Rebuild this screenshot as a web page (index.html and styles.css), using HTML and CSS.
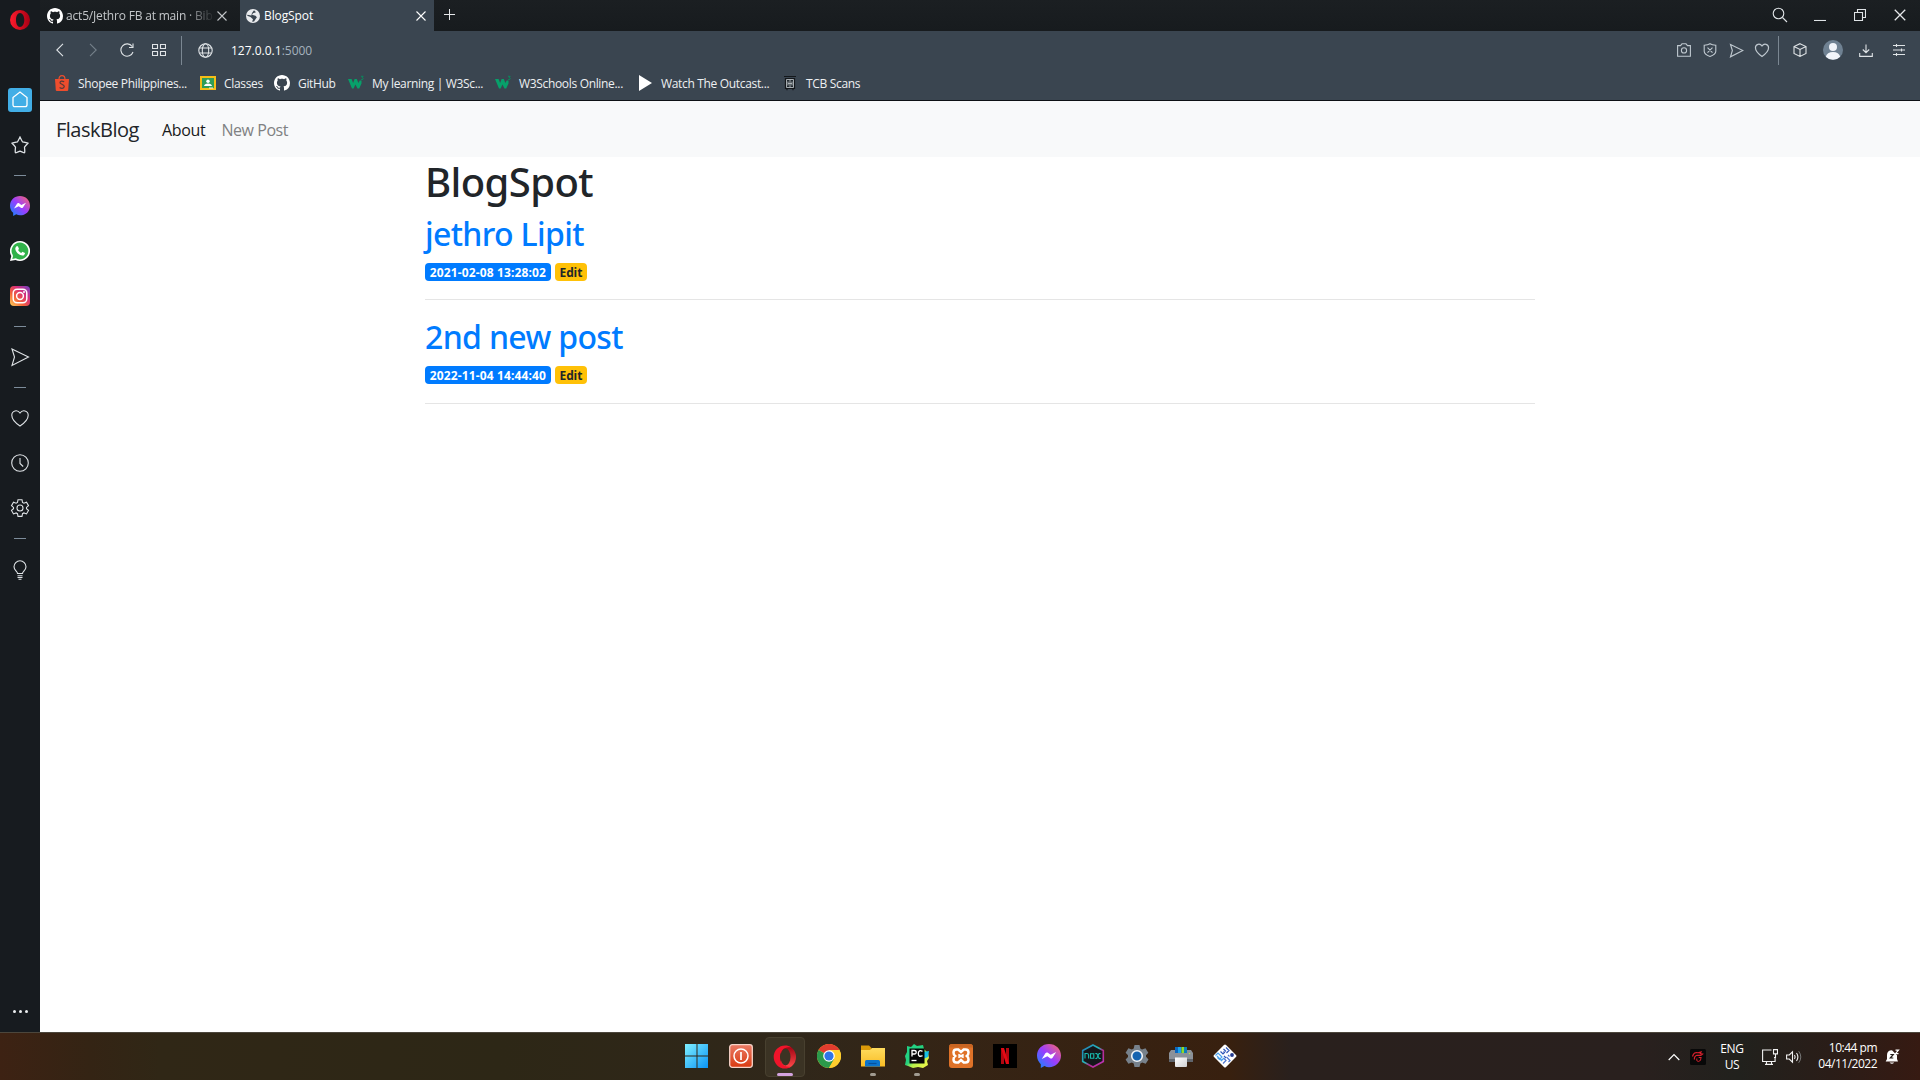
FILE: index.html
```html
<!DOCTYPE html>
<html lang="en">
<head>
<meta charset="utf-8">
<title>BlogSpot</title>
<link rel="stylesheet" href="styles.css">
</head>
<body>
<svg class="defs" width="0" height="0" aria-hidden="true">
  <defs>
    <linearGradient id="msg" x1="0" y1="1" x2="1" y2="0"><stop offset="0" stop-color="#0a8cff"/><stop offset=".5" stop-color="#9a3dff"/><stop offset="1" stop-color="#ff6b64"/></linearGradient>
    <linearGradient id="opera" x1="0" x2="1"><stop offset="0" stop-color="#ff1b2d"/><stop offset="1" stop-color="#a70014"/></linearGradient>
    <linearGradient id="operaIn" x1="0" y1="0" x2="0" y2="1"><stop offset="0" stop-color="#9c0010"/><stop offset="1" stop-color="#ff4b4b"/></linearGradient>
    <linearGradient id="insta" x1="0" y1="1" x2="1" y2="0"><stop offset="0" stop-color="#ffd35a"/><stop offset=".35" stop-color="#f4623a"/><stop offset=".65" stop-color="#d62e7c"/><stop offset="1" stop-color="#6a45c8"/></linearGradient>
    <linearGradient id="win" x1="0" y1="0" x2="1" y2="1"><stop offset="0" stop-color="#7ff0ff"/><stop offset="1" stop-color="#0a93f5"/></linearGradient>
    <linearGradient id="power" x1="0" y1="0" x2="0" y2="1"><stop offset="0" stop-color="#ea7b66"/><stop offset="1" stop-color="#d93a10"/></linearGradient>
    <linearGradient id="folder" x1="0" y1="0" x2="0" y2="1"><stop offset="0" stop-color="#ffdc5e"/><stop offset="1" stop-color="#f9bc25"/></linearGradient>
    <linearGradient id="pc" x1="0" y1="0" x2="1" y2="1"><stop offset="0" stop-color="#1fd489"/><stop offset=".45" stop-color="#26d17e"/><stop offset=".6" stop-color="#b8ef4a"/><stop offset="1" stop-color="#fcf84a"/></linearGradient>
    <linearGradient id="nox" x1="0" y1="0" x2="1" y2="1"><stop offset="0" stop-color="#2477b8"/><stop offset=".45" stop-color="#25b8b8"/><stop offset=".6" stop-color="#b02b8c"/><stop offset="1" stop-color="#c137c4"/></linearGradient>
    <linearGradient id="paper" x1="0" y1="0" x2="1" y2="1"><stop offset="0" stop-color="#fff"/><stop offset="1" stop-color="#cfcfd2"/></linearGradient>
    <symbol id="i-close" viewBox="0 0 12 12"><path d="M1.5 1.5l9 9M10.5 1.5l-9 9" fill="none" stroke="currentColor" stroke-width="1.1"/></symbol>
    <symbol id="i-github" viewBox="0 0 16 16"><path fill="#fff" d="M8 0C3.58 0 0 3.58 0 8c0 3.54 2.29 6.53 5.47 7.59.4.07.55-.17.55-.38 0-.19-.01-.82-.01-1.49-2.01.37-2.53-.49-2.69-.94-.09-.23-.48-.94-.82-1.13-.28-.15-.68-.52-.01-.53.63-.01 1.08.58 1.23.82.72 1.21 1.87.87 2.33.66.07-.52.28-.87.51-1.07-1.78-.2-3.64-.89-3.64-3.95 0-.87.31-1.59.82-2.15-.08-.2-.36-1.02.08-2.12 0 0 .67-.21 2.2.82.64-.18 1.32-.27 2-.27s1.36.09 2 .27c1.53-1.04 2.2-.82 2.2-.82.44 1.1.16 1.92.08 2.12.51.56.82 1.27.82 2.15 0 3.07-1.87 3.75-3.65 3.95.29.25.54.73.54 1.48 0 1.07-.01 1.93-.01 2.2 0 .21.15.46.55.38A8.01 8.01 0 0 0 16 8c0-4.42-3.58-8-8-8z"/></symbol>
    <symbol id="i-w3" viewBox="0 0 16 16"><path fill="#07a06a" d="M0 4h3.600l1.500 4L6.600 4h2.200l1.600 4 1.300-2.500h1.800v3L11.200 13.400H9.500L7.400 9.500l-1.800 3.900H4z"/><path d="M13 1.300h2.200L14 2.700c2 0 1.600 2.300-.9 1.900" fill="none" stroke="#07905f" stroke-width=".9"/></symbol>
    <symbol id="i-messenger" viewBox="0 0 24 24"><path fill="url(#msg)" d="M12 0C5.300 0 0 4.900 0 11.600c0 3.500 1.400 6.500 3.800 8.600V24l3.700-2c1.400.8 2.900 1.200 4.500 1.200 6.700 0 12-4.900 12-11.600S18.700 0 12 0z"/><path d="M4.800 14.900l3.600-5.600c.6-.9 1.700-1.100 2.500-.5l2.700 2 5.600-2.800-3.600 5.700c-.6.9-1.700 1.100-2.500.5l-2.700-2z" fill="#fff"/></symbol>
    <symbol id="i-send" viewBox="0 0 20 20"><path d="M2 2l16.500 8L2 18.500 4.500 10z"/></symbol>
    <symbol id="i-heart" viewBox="0 0 20 20"><path d="M10 18C7.500 16.300 1.800 12 1.800 7.200 1.800 2.500 7.500 1.200 10 5c2.500-3.800 8.200-2.500 8.200 2.200C18.200 12 12.500 16.300 10 18z"/></symbol>
  </defs>
</svg>

<div class="desktop">
  <div class="browser">
    <aside class="sidebar">
      <div class="side-logo"><svg width="20" height="20" viewBox="0 0 20 20"><path fill="url(#opera)" fill-rule="evenodd" d="M10 0a10 10 0 1 1 0 20a10 10 0 1 1 0-20zm0 3C7.500 3 6 6.200 6 10s1.500 7 4 7 4.300-3.200 4.300-7S12.500 3 10 3z"/></svg></div>
      <div class="side-cell"><span class="home"><svg class="line" width="16" height="17" viewBox="0 0 16 17"><path d="M1 6.500L8 1l7 5.500v7.200q0 2-2 2H3q-2 0-2-2z" stroke-width="1.300"/></svg></span></div>
      <div class="side-cell"><svg class="line" width="18" height="18" viewBox="0 0 20 20"><path d="M10 1.200Q11.500 4.500 12.700 6.400 15.500 6.900 18.800 8 16.500 10.300 15 12.300 15.300 15 15.300 18q-.3.700-1 .6Q12 17.500 10 16.800 8 17.500 5.700 18.600q-.7.100-1-.6 0-3 .3-5.700Q3.500 10.300 1.200 8q3.300-1.100 6.100-1.600Q8.500 4.500 10 1.200z" stroke-width="1.400"/></svg></div>
      <div class="side-rule"></div>
      <div class="side-cell"><svg width="20" height="20"><use href="#i-messenger"/></svg></div>
      <div class="side-cell"><svg width="20" height="20" viewBox="0 0 20 20"><path fill="#fff" d="M10 0a10 10 0 1 1-4.500 18.900L0 20l1.300-5A10 10 0 0 1 10 0z"/><path fill="#31b24a" d="M10 1.600a8.400 8.400 0 1 1-4.200 15.700L2.300 18.100l.8-3.300A8.400 8.400 0 0 1 10 1.600z"/><path fill="#fff" d="M6.800 5.200l1.100.1 1.100 2.600-.9 1.200c.8 1.500 1.800 2.300 3.200 3l1.100-1.300 2.600 1.300c0 1.700-1.200 2.600-2.700 2.500-3.500-.4-7-3.600-7-7 0-1 .7-2.100 1.500-2.400z"/></svg></div>
      <div class="side-cell"><svg width="20" height="20" viewBox="0 0 20 20"><rect width="20" height="20" rx="4" fill="url(#insta)"/><g fill="none" stroke="#fff" stroke-width="1.500"><rect x="3.200" y="3.200" width="13.600" height="13.600" rx="4"/><circle cx="10" cy="10" r="3.400"/></g><circle cx="14" cy="6" r="1" fill="#fff"/></svg></div>
      <div class="side-rule"></div>
      <div class="side-cell"><svg class="line" width="20" height="20"><use href="#i-send"/></svg></div>
      <div class="side-rule"></div>
      <div class="side-cell"><svg class="line" width="20" height="20"><use href="#i-heart"/></svg></div>
      <div class="side-cell"><svg class="line" width="20" height="20" viewBox="0 0 20 20"><circle cx="10" cy="10" r="8.300"/><path d="M10 5v5.500l3.200 3"/></svg></div>
      <div class="side-cell"><svg class="line" width="20" height="20" viewBox="0 0 20 20"><circle cx="10" cy="10" r="3"/><path d="M8 1.700h4l.5 2.700 1.400.8 2.600-1 2 3.500-2 1.700v1.300l2 1.700-2 3.500-2.600-1-1.400.8-.5 2.700H8l-.5-2.700-1.400-.8-2.600 1-2-3.500 2-1.700V9.400l-2-1.700 2-3.500 2.600 1 1.400-.8z"/></svg></div>
      <div class="side-rule last"></div>
      <div class="side-cell"><svg class="line" width="16" height="20" viewBox="0 0 16 20"><path d="M5.500 13.500c0-2-3.500-3-3.500-6.700a6 6 0 0 1 12 0c0 3.700-3.500 4.700-3.500 6.700zM5.500 15.800h5M5.500 17.500h5M6.500 19.200h3"/></svg></div>
      <div class="side-more"><i></i><i></i><i></i></div>
    </aside>

    <div class="window">
      <header class="tabstrip">
        <div class="tab">
          <svg width="16" height="16"><use href="#i-github"/></svg>
          <span class="tab-title faded">act5/Jethro FB at main · Bib</span>
          <svg width="12" height="12"><use href="#i-close"/></svg>
        </div>
        <div class="tab active">
          <svg width="14" height="14" viewBox="0 0 14 14"><circle cx="7" cy="7" r="7" fill="#e8eaed"/><path d="M8 1.300l2 1.900-3 1-1 1.600 3.500.9 1.400 1.500-1.600 2.300-1.200 2-2 .3.900-2.600L4.500 8 1.200 6.800l.3-1 3.800.8L6 4z" fill="#3a4550"/></svg>
          <span class="tab-title">BlogSpot</span>
          <svg width="12" height="12"><use href="#i-close"/></svg>
        </div>
        <svg class="new-tab" width="12" height="12" viewBox="0 0 12 12"><path d="M5.500 0v11M0 5.500h11" stroke="#e6e8ea"/></svg>
        <div class="win-buttons line">
          <svg width="16" height="16" viewBox="0 0 16 16"><circle cx="6.500" cy="6.500" r="5.300"/><path d="M10.500 10.500l4.500 4.500"/></svg>
          <svg width="12" height="12" viewBox="0 0 12 12"><path d="M0 11.500h12"/></svg>
          <svg width="12" height="12" viewBox="0 0 12 12"><path d="M.5 3.500h8v8h-8zM3.500 3.500v-3h8v8h-3"/></svg>
          <svg width="14" height="14"><use href="#i-close"/></svg>
        </div>
      </header>

      <div class="addressbar">
        <div class="nav-icons line">
          <svg width="10" height="14" viewBox="0 0 10 14"><path d="M8 .8L1.800 7 8 13.200"/></svg>
          <svg class="dim" width="10" height="14" viewBox="0 0 10 14"><path d="M2 .8L8.200 7 2 13.200"/></svg>
          <svg width="14" height="14" viewBox="0 0 14 14"><path d="M12.200 3.500A6.200 6.200 0 1 0 13 9M13 .5v4H9"/></svg>
          <svg width="14" height="12" viewBox="0 0 14 12"><path d="M.5.500h5v4h-5zM8.500.5h5v4h-5zM.5 7.500h5v4h-5zM8.500 7.500h5v4h-5z"/></svg>
          <b class="divider"></b>
          <svg width="15" height="15" viewBox="0 0 15 15"><circle cx="7.500" cy="7.500" r="6.700"/><ellipse cx="7.500" cy="7.500" rx="3.200" ry="6.700"/><path d="M1.500 5h12M1.500 10h12"/></svg>
        </div>
        <div class="url">127.0.0.1<span>:5000</span></div>
        <div class="tool-icons line">
          <svg class="soft" width="14" height="14" viewBox="0 0 14 14"><path d="M.6 2.600h2.900L5 .8h4l1.500 1.800h2.900v10.600H.6z"/><circle cx="7" cy="7.400" r="2.600"/></svg>
          <svg class="soft" width="14" height="14" viewBox="0 0 14 14"><path d="M1.200 2.200Q5 2 7 .7q2 1.300 5.800 1.500v6q0 3.200-5.800 5.200-5.800-2-5.800-5.200zM4.500 4.600l5 5M9.500 4.600l-5 5"/></svg>
          <svg class="soft bold" width="15" height="15"><use href="#i-send"/></svg>
          <svg class="soft bold" width="16" height="16"><use href="#i-heart"/></svg>
          <b class="divider"></b>
          <svg width="14" height="14" viewBox="0 0 14 14"><path d="M7 .7l6 2.800v7L7 13.400l-6-2.900v-7zM1 3.500l6 3 6-3M7 6.500v6.900"/></svg>
          <svg class="avatar" width="20" height="20" viewBox="0 0 20 20"><circle cx="10" cy="10" r="10" fill="#6f8192"/><circle cx="10" cy="7" r="4" fill="#f1f4fa"/><path d="M2.800 16.800Q4 12 10 12t7.200 4.800A10 10 0 0 1 2.800 16.800z" fill="#f1f4fa"/></svg>
          <svg width="14" height="13" viewBox="0 0 14 13"><path d="M7 .5v8M3.800 5.500L7 8.700l3.200-3.200M.7 9v3.400h12.600V9"/></svg>
          <svg width="12" height="12" viewBox="0 0 12 12"><path d="M0 1.500h12M0 6h12M0 10.500h12M3.500 0v3M8.500 4.500v3M3.500 9v3"/></svg>
        </div>
      </div>

      <div class="bookmarks">
        <a><svg width="16" height="16" viewBox="0 0 16 16"><path d="M5 4.500Q5 .7 8 .7t3 3.800" fill="none" stroke="#ee4d2d" stroke-width="1.200"/><path d="M1 4h14l-.8 11.200q-.1.800-1 .8H2.800q-.9 0-1-.8z" fill="#ee4d2d"/><path d="M10.200 6.800Q7 5.200 6 7.300C5.500 9.500 10.500 9 10.300 11.700 9.800 14 7 13.600 5.600 12.600" fill="none" stroke="#573a39" stroke-width="1.200"/></svg>Shopee Philippines...</a>
        <a><svg width="16" height="16" viewBox="0 0 16 16"><path d="M0 1h16v14H0z" fill="#f4bd16"/><path d="M2 3h12v10H2z" fill="#2f9d58"/><circle cx="8" cy="6.300" r="1.700" fill="#fff"/><path d="M4 11q.5-2.500 4-2.500t4 2.500z" fill="#fff"/><path d="M9 12.500h4v1H9z" fill="#eee"/></svg>Classes</a>
        <a><svg width="16" height="16"><use href="#i-github"/></svg>GitHub</a>
        <a><svg width="16" height="16"><use href="#i-w3"/></svg>My learning | W3Sc...</a>
        <a><svg width="16" height="16"><use href="#i-w3"/></svg>W3Schools Online...</a>
        <a><svg width="16" height="16" viewBox="0 0 16 16"><path d="M2 0l13 8-13 8z" fill="#fff"/></svg>Watch The Outcast...</a>
        <a><svg width="16" height="16" viewBox="0 0 16 16"><path d="M2 1.500h12M3.500 3.500h9v10h-9zM5 14v1.300M11 14v1.300" fill="#222a30" stroke="#14181c" stroke-width="1.200"/><path d="M4.500 4.500h7v8h-7zM8 4.500v8M6 6.500v4M10 6.500v4M6 8.500h4" fill="none" stroke="#b4babe" stroke-width=".9"/></svg>TCB Scans</a>
      </div>

      <div class="page">
        <nav class="navbar">
          <a class="brand">FlaskBlog</a>
          <a class="nav-link current">About</a>
          <a class="nav-link">New Post</a>
        </nav>
        <main class="container">
          <h1>BlogSpot</h1>
          <article>
            <h2>jethro Lipit</h2>
            <div class="meta"><span class="badge primary">2021-02-08 13:28:02</span><span class="badge warning">Edit</span></div>
            <hr>
          </article>
          <article>
            <h2>2nd new post</h2>
            <div class="meta"><span class="badge primary">2022-11-04 14:44:40</span><span class="badge warning">Edit</span></div>
            <hr>
          </article>
        </main>
      </div>
    </div>
  </div>

  <footer class="taskbar">
    <div class="apps">
      <div class="app"><svg width="24" height="24" viewBox="0 0 24 24"><path fill="url(#win)" d="M0 0h11.500v11.500H0zM12.500 0H23v11.500H12.500zM0 12.500h11.500V24H0zM12.500 12.500H23V24H12.500z"/></svg></div>
      <div class="app"><svg width="24" height="24" viewBox="0 0 24 24"><rect x=".7" y=".7" width="22.600" height="22.600" rx="2.500" fill="url(#power)" stroke="#f6d3c8" stroke-width="1.300"/><circle cx="12" cy="12" r="7" fill="none" stroke="#fff" stroke-width="1.500"/><path d="M12 8v8" stroke="#fff" stroke-width="1.700"/></svg></div>
      <div class="app focused"><svg width="24" height="24" viewBox="0 0 24 24"><path fill="url(#operaIn)" d="M8 3C11 .5 16 0 19.500 3.500a12 12 0 0 1 0 17C16 24 11 23.500 8 21z"/><path fill="#f0142a" fill-rule="evenodd" d="M12 .5a11.300 11.500 0 1 0 0 23c2.500 0 4.500-.6 6-2-6 1.500-11-3-11-9.500s5-11 11-9.500c-1.500-1.400-3.500-2-6-2z"/><ellipse cx="12.500" cy="12" rx="5" ry="8.500" fill="#3c3323"/></svg></div>
      <div class="app"><svg width="24" height="24" viewBox="0 0 24 24"><circle cx="12" cy="12" r="12" fill="#ffce2e"/><path fill="#e23c2e" d="M12 12L1.600 6a12 12 0 0 1 20.800 0z"/><path fill="#2b9a4b" d="M12 12L1.600 6A12 12 0 0 0 12 24l5.200-9z"/><path fill="#ffce2e" d="M12 12V6h10.400A12 12 0 0 1 12 24l5.200-9z"/><circle cx="12" cy="12" r="5.800" fill="#fff"/><circle cx="12" cy="12" r="4.600" fill="#2f74e8"/></svg></div>
      <div class="app running"><svg width="24" height="24" viewBox="0 0 24 24"><path d="M0 1.500h8L10.500 4v4H0z" fill="#dc9a09"/><path d="M0 6h9l2-2h13v18.500H0z" fill="url(#folder)"/><path d="M4 22.500v-5Q4 16 5.500 16h12q1.500 0 1.500 1.500v5z" fill="#0b74cc"/><path d="M7.500 19.500h8" stroke="#07519d" stroke-width="1.200"/></svg></div>
      <div class="app running"><svg width="24" height="24" viewBox="0 0 24 24"><path fill="url(#pc)" d="M2 2l4 1 3-3 3 2 6-1 1 4 4 4 1 5-2 3 1 4-5 3-5-1-5 1-5-2-3-1 1-5-1-4 2-4z"/><path fill="#15bfe8" d="M18 8l6-1-1 6-5 2z"/><path d="M4.500 4.500h15v15h-15z" fill="#050505"/><path d="M6.500 16.500h5" stroke="#fff" stroke-width="1.300"/><path d="M7 12.500v-6h2.200q2 0 2 1.800T9.200 10H7M17.500 7.300q-4-2-4.200 2.200 0 4 4.200 2.200" fill="none" stroke="#fff" stroke-width="1.300"/></svg></div>
      <div class="app"><svg width="24" height="24" viewBox="0 0 24 24"><rect width="24" height="24" rx="3" fill="#df7228"/><path d="M0 3.500Q0 0 3 0h18q3 0 3 3.500z" fill="#c96522"/><path d="M4.500 8.500q0-3 3-3h1.800L12 8l2.700-2.500h1.800q3 0 3 3 0 2.200-1.600 3.500 1.600 1.300 1.600 3.500 0 3-3 3h-1.800L12 16l-2.700 2.500H7.500q-3 0-3-3 0-2.200 1.600-3.500-1.600-1.300-1.600-3.500z" fill="none" stroke="#fff" stroke-width="2.500"/><path d="M9.300 10.500L12 12l2.700-1.500M9.300 13.500L12 12l2.700 1.500" fill="none" stroke="#fff" stroke-width="2"/></svg></div>
      <div class="app"><svg width="24" height="24" viewBox="0 0 24 24"><path d="M0 0h24v24H0z" fill="#000"/><path d="M8 4h3v16H8zM13 4h3v16h-3z" fill="#b20710"/><path d="M8 4h3l5 16h-3z" fill="#e50914"/></svg></div>
      <div class="app"><svg width="24" height="24"><use href="#i-messenger"/></svg></div>
      <div class="app"><svg width="24" height="24" viewBox="0 0 24 24"><path d="M12 1l10.300 5.500v11L12 23 1.700 17.500v-11z" fill="#14171b" stroke="url(#nox)" stroke-width="1.600"/><path d="M4 14.500v-5h1.800q1.800 0 1.800 1.700v3.300M9.500 9.700h3.300v4.600H9.500zM14.300 9.500h1.500l2.400 5h1.600M19.500 9.500h-1.400l-2.400 5h-1.400" fill="none" stroke="#18b9ad" stroke-width="1.100"/></svg></div>
      <div class="app"><svg width="24" height="24" viewBox="0 0 24 24"><path fill="#77818b" d="M9.500 1h5l.8 3.500 1.700 1 3.500-1.200 2.800 4.500L21 11.200v1.600l2.500 2.600-2.800 4.400-3.500-1.200-1.800 1-.9 3.400h-5l-.8-3.500-1.800-1-3.500 1.300L.6 15.400 3 12.900v-1.700L.6 8.700l2.800-4.500 3.500 1.300 1.800-1z"/><circle cx="12" cy="12" r="5.300" fill="#1664b0" stroke="#f2f4f6" stroke-width="1.600"/></svg></div>
      <div class="app"><svg width="24" height="24" viewBox="0 0 24 24"><path d="M6 3h4v7H6z" fill="#0c67bf"/><path d="M9 3h3.500v7H9z" fill="#1aa3ee"/><path d="M12.500 3H15v7h-2.500z" fill="#8fdd28"/><path d="M15 3h3v7h-3z" fill="#0c7fb8"/><path d="M2 6h4v3h12V6h4l2 3v9H0V9z" fill="#8b9199"/><path d="M0 15h24v3H0z" fill="#60656c"/><path d="M6 13.500h12v8.500q0 1-1 1H7q-1 0-1-1z" fill="url(#paper)"/><circle cx="20.500" cy="9.500" r=".8" fill="#b7e34a"/></svg></div>
      <div class="app"><svg width="24" height="24" viewBox="0 0 24 24"><rect x="3.500" y="3.500" width="17" height="17" rx="1.500" transform="rotate(45 12 12)" fill="#fff"/><g fill="none" stroke-width="1.200"><path d="M2.500 11.500l2.500-2.500 4 4-2.500 2.500-2-2M8 17l3-3M4 12l5 5" stroke="#4aa3ef"/><path d="M7.500 7.500l2.500 2.500 1.500-1.500-1-1M10.500 5l2.500 2.500M13 3.500l3 3-2.500 2.500M11 12l2 2" stroke="#3057b8"/><path d="M10 19.500l3-3-2-2M13.500 13l3.500 3.500-1.500 1.500M15 11l1.500 1.500" stroke="#4d74cf"/></g><circle cx="19" cy="11" r="1.900" fill="#233b91"/></svg></div>
    </div>
    <div class="tray">
      <svg class="chevron" width="12" height="8" viewBox="0 0 12 8"><path d="M.7 7L6 1.500 11.300 7" fill="none" stroke="#fff" stroke-width="1.200"/></svg>
      <svg class="garena" width="16" height="16" viewBox="0 0 16 16"><rect width="16" height="16" rx="1.500" fill="#080808"/><path d="M2.500 7.500Q4 2.500 8 3.800L11 3l-.8 1.500 2.300.5-1.700 1.300H7Q3.800 7.500 4.500 10.500" fill="none" stroke="#d8202c" stroke-width="1.200"/><path d="M11.500 8.500H8.700M11 8.700q.3 3.500-2.700 3.800-2.300-.3-1.500-3" fill="none" stroke="#d8202c"/></svg>
      <div class="lang"><span>ENG</span><span>US</span></div>
      <svg class="monitor" width="16" height="16" viewBox="0 0 16 16"><path d="M9.500 1H.6v11.500h12.500V8M4.500 12.500v2.900M9.500 12.500v2.900M3 15.400h8M11.500.6h4v4.300h-4zM13.500 5v3.500H12" fill="none" stroke="#f2f2f2" stroke-width="1.100"/></svg>
      <svg class="speaker" width="16" height="14" viewBox="0 0 16 14"><path d="M.6 5h2.700L6.500 1.800v10.400L3.300 9H.6zM8.500 5q1.300 2 0 4M10.500 3q2.800 4 0 8" fill="none" stroke="#f2f2f2" stroke-width="1.100"/><path d="M12.700 1.200q4.200 5.800 0 11.600" fill="none" stroke="#777"/></svg>
      <div class="clock"><span>10:44 pm</span><span>04/11/2022</span></div>
      <svg class="bell" width="15" height="16" viewBox="0 0 15 16"><path d="M2 10V6Q2 1.300 7 1.300l5 5V10l1 2.500H.7zM4.500 13.500h4.700Q7 16 4.500 13.500z" fill="#fff"/><path d="M5.300 5.500h3l-3 3.500h3" fill="none" stroke="#28211d" stroke-width="1.200"/><path d="M10.500 1.200h3l-3 3.500h3" fill="none" stroke="#fff" stroke-width="1.200"/></svg>
    </div>
  </footer>
</div>
</body>
</html>
```
FILE: styles.css
```css
* { box-sizing: border-box; }
body { margin: 0; font-family: "Open Sans", sans-serif; background: #fff; overflow: hidden; }
svg { display: block; flex: none; }
.defs { height: 0; }
.line { fill: none; stroke: #dfe3e6; stroke-width: 1.1; color: #e6e8ea; }
.desktop { height: 1080px; display: flex; flex-direction: column; }
.browser { height: 1032px; display: flex; }

/* sidebar */
.sidebar { width: 40px; background: #171b1f; display: flex; flex-direction: column; align-items: center; }
.side-logo { height: 77px; padding-top: 10px; }
.side-cell { height: 45px; display: flex; align-items: center; justify-content: center; }
.side-rule { width: 12px; height: 1px; margin: 8px 0 7px; background: #7d8c9a; flex: none; }
.side-rule.last { margin-bottom: 8px; }
.home { width: 24px; height: 24px; border-radius: 3px; background: #42aee6; display: flex; align-items: center; justify-content: center; }
.side-cell .home svg { stroke: #fff; }
.side-more { margin-top: auto; padding-bottom: 19px; display: flex; gap: 3px; }
.side-more i { width: 3px; height: 3px; border-radius: 50%; background: #eceff1; }

/* browser chrome */
.window { flex: 1; display: flex; flex-direction: column; }
.tabstrip { height: 31px; background: linear-gradient(#1b1f22, #171b1e); display: flex; }
.tab { width: 200px; padding: 0 12px 0 7px; display: flex; align-items: center; color: #c3c6c9; font-size: 12px; letter-spacing: -.18px; white-space: nowrap; }
.tab.active { width: 194px; padding: 0 7px 0 6px; background: #3a4550; color: #fff; letter-spacing: -.1px; }
.tab-title { flex: 1; padding-left: 3px; overflow: hidden; }
.tab.active .tab-title { padding-left: 4px; }
.faded { -webkit-mask: linear-gradient(90deg, #000 122px, transparent 152px); mask: linear-gradient(90deg, #000 122px, transparent 152px); }
.new-tab { margin: 9px 0 0 10px; }
.win-buttons { margin-left: auto; padding: 7px 13px 0 0; display: flex; gap: 28px; }
.win-buttons svg:nth-child(1) { margin-right: -2px; }
.win-buttons svg:nth-child(2), .win-buttons svg:nth-child(3) { margin-top: 2px; }
.win-buttons svg:nth-child(4) { margin: 1px 0 0 -1px; }
.addressbar { height: 37px; padding-top: 1px; background: #3a4550; display: flex; align-items: center; }
.nav-icons { display: grid; grid-template-columns: 40px 26px 41px 23px 22px 26px 13px; place-items: center; }
.nav-icons .dim { stroke: #75808a; }
.divider { width: 1px; height: 29px; background: #7b8792; }
.url { color: #fff; font-size: 12px; }
.url span { color: #a5b2be; }
.tool-icons { margin-left: auto; padding-right: 4px; display: grid; grid-template-columns: 26px 26px 27px 24px 8px 35px 32px 33px 34px; place-items: center; }
.tool-icons .soft { stroke: #bfc8cf; }
.tool-icons .bold { stroke-width: 1.5; }
.tool-icons .avatar { stroke: none; }
.bookmarks { height: 33px; padding: 0 0 2px 14px; background: #3a4550; border-bottom: 1px solid #0d1115; display: grid; grid-template-columns: 146px 74px 74px 147px 142px 145px auto; align-items: center; color: #eef0f2; font-size: 12px; letter-spacing: -.33px; }
.bookmarks a { display: flex; align-items: center; gap: 8px; white-space: nowrap; }

/* page */
.page { flex: 1; background: #fff; color: #212529; line-height: 1.5; }
.navbar { height: 56px; padding: 10px 16px 8px; background: #f8f9fa; display: flex; align-items: center; }
.brand { margin-right: 15px; font-size: 20px; letter-spacing: -.5px; }
.nav-link { padding: 0 8px; font-size: 16px; color: #808182; letter-spacing: -.45px; }
.nav-link.current { color: #191a1b; letter-spacing: -.3px; }
.container { width: 1110px; margin: 0 auto 0 385px; }
h1, h2 { margin: 0; font-family: "Noto Sans", sans-serif; font-weight: 500; line-height: 1.2; }
h1 { padding: 1px 0 7px; font-size: 40px; letter-spacing: -.6px; }
h2 { padding: 1.500px 0 6.500px; font-size: 32px; letter-spacing: -.65px; color: #007bff; }
.meta { height: 24px; padding-top: 3.600px; display: flex; align-items: flex-start; gap: 4px; }
.badge { height: 18px; padding: 4px 4.800px 2px; border-radius: 4px; font-size: 12px; font-weight: 700; line-height: 1; }
.primary { background: #007bff; color: #fff; letter-spacing: .13px; }
.warning { background: #ffc107; color: #212529; letter-spacing: -.15px; }
hr { margin: 16px 0; border: 0; border-top: 1px solid #e5e5e5; }

/* taskbar */
.taskbar { height: 48px; border-top: 1px solid #4c463c; background: linear-gradient(90deg, #3d2213 0, #342414 90px, #302716 160px, #2d2716 500px, #30271a 800px, #352415 960px, #38200f 1230px, #29201d 1290px, #29201e 1640px, #21211d 1740px, #2a1d18 1830px, #361a12 1920px); display: grid; grid-template-columns: 675px 572px 1fr; }
.apps { grid-column: 2; display: flex; align-items: center; }
.app { width: 44px; height: 47px; display: flex; flex-direction: column; align-items: center; padding-top: 11px; }
.app::after { content: ""; }
.focused { width: 40px; height: 40px; margin: 0 2px; padding-top: 7px; border: 1px solid #48402f; border-radius: 4px; background: #3b3324; }
.focused::after { width: 16px; height: 3px; margin-top: 4px; border-radius: 2px; background: #d4a3e0; }
.running::after { width: 6px; height: 3px; margin-top: 5px; border-radius: 2px; background: #a19b91; }
.tray { display: flex; align-items: center; justify-content: flex-end; padding-right: 20px; color: #fff; font-size: 12px; line-height: 16px; }
.garena { margin-left: 10px; }
.lang { width: 40px; margin: 0 10px 0 6px; padding-top: 1px; display: flex; flex-direction: column; align-items: center; letter-spacing: -.35px; }
.speaker { margin-left: 8px; }
.clock { width: 75px; padding-bottom: 1px; display: flex; flex-direction: column; align-items: flex-end; letter-spacing: -.5px; }
.bell { margin-left: 8px; }
```
